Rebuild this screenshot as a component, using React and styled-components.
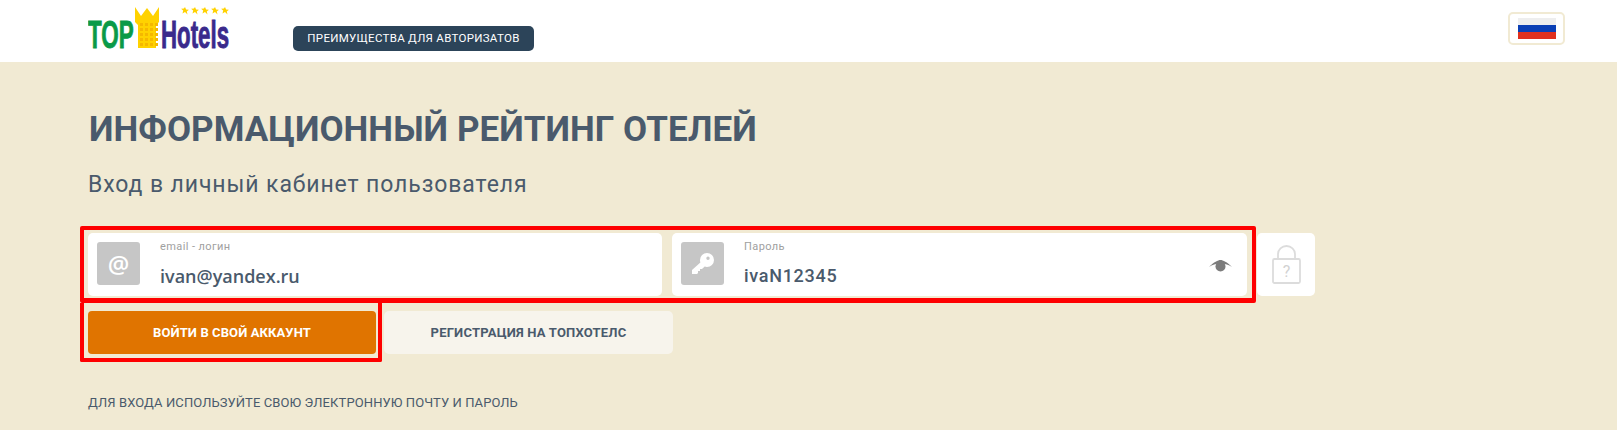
import React from "react";
import styled, { createGlobalStyle } from "styled-components";

const GlobalStyle = createGlobalStyle`
  html, body {
    margin: 0;
    padding: 0;
    background: #f1ead3;
    font-family: Roboto, "Open Sans", sans-serif;
  }
`;

const Logo = () => (
  <LogoSvg viewBox="0 0 141 50" width="141" height="50">
    <text
      transform="translate(0 41) scale(0.59 1)"
      fontFamily="Liberation Sans"
      fontWeight="700"
      fontSize="38"
      fill="#0a9a48"
      stroke="#0a9a48"
      strokeWidth="0.9"
    >
      TOP
    </text>
    <path d="M47 0l6 9 6-8 6 8 6-9v15l-3 3v23H50V18l-3-3z" fill="#ffd200" />
    <g fill="#f5b800">
      {[16, 21, 26, 31, 36].map((y) =>
        [52, 57, 62, 67].map((x) => <rect key={x + "-" + y} x={x} y={y} width="3" height="3" />)
      )}
    </g>
    <text
      transform="translate(73 41) scale(0.586 1)"
      fontFamily="Liberation Sans"
      fontWeight="700"
      fontSize="38"
      fill="#3a2a8c"
      stroke="#3a2a8c"
      strokeWidth="0.9"
    >
      Hotels
    </text>
    <g fill="#ffd200">
      {[97, 107, 117, 127, 137].map((x) => (
        <path
          key={x}
          transform={`translate(${x} 4)`}
          d="M0-4l1.1 2.6 2.8.2-2.1 1.8.7 2.8L0 1l-2.500 1.400.7-2.800-2.100-1.800 2.800-.2z"
        />
      ))}
    </g>
  </LogoSvg>
);

const App = () => {
  return (
    <>
      <GlobalStyle />
      <Header>
        <HeaderLeft>
          <Logo />
          <Pill>ПРЕИМУЩЕСТВА ДЛЯ АВТОРИЗАТОВ</Pill>
        </HeaderLeft>
        <FlagButton>
          <Flag />
        </FlagButton>
      </Header>
      <Main>
        <Title>ИНФОРМАЦИОННЫЙ РЕЙТИНГ ОТЕЛЕЙ</Title>
        <Subtitle>Вход в личный кабинет пользователя</Subtitle>
        <FieldsRow>
          <FieldsHighlight>
            <Field $width={574}>
              <IconBox>
                <AtSign>@</AtSign>
              </IconBox>
              <FieldText>
                <FieldLabel>email - логин</FieldLabel>
                <FieldValue>ivan@yandex.ru</FieldValue>
              </FieldText>
            </Field>
            <Field $width={575}>
              <IconBox>
                <svg width="22" height="21" viewBox="0 0 22 21">
                  <path
                    fill="#fff"
                    fillRule="evenodd"
                    d="M15 0a7 7 0 110 14c-.8 0-1.600-.1-2.300-.4L10 16H8v2H6v2l-1 1H0v-4L8.400 9.500C8.100 8.700 8 7.800 8 7a7 7 0 017-7zm1 3.500a1.700 1.700 0 100 3.400 1.700 1.700 0 000-3.400z"
                  />
                </svg>
              </IconBox>
              <FieldText>
                <FieldLabel>Пароль</FieldLabel>
                <PasswordValue>ivaN12345</PasswordValue>
              </FieldText>
              <EyeIcon width="23" height="12" viewBox="0 0 23 12">
                <path
                  fill="#7c7c7c"
                  d="M0 7C5 2 9 0 11.500 0S18 2 23 7c-3-2-7-3.500-11.500-3.500S3 5 0 7z"
                />
                <circle cx="11.500" cy="6.500" r="5" fill="#7c7c7c" />
              </EyeIcon>
            </Field>
          </FieldsHighlight>
          <LockButton>
            <svg width="29" height="39" viewBox="0 0 29 39">
              <path
                d="M6 14V9a8.500 8 0 0117 0v5"
                fill="none"
                stroke="#dcdcdc"
                strokeWidth="1.800"
              />
              <rect
                x="1"
                y="14"
                width="27"
                height="24"
                rx="1.500"
                fill="none"
                stroke="#dcdcdc"
                strokeWidth="1.800"
              />
              <text
                x="14.500"
                y="32"
                textAnchor="middle"
                fontFamily="Roboto"
                fontSize="16"
                fill="#d2d2d2"
              >
                ?
              </text>
            </svg>
          </LockButton>
        </FieldsRow>
        <ButtonsRow>
          <ButtonHighlight>
            <LoginButton>ВОЙТИ В СВОЙ АККАУНТ</LoginButton>
          </ButtonHighlight>
          <RegisterButton>РЕГИСТРАЦИЯ НА ТОПХОТЕЛС</RegisterButton>
        </ButtonsRow>
        <Hint>ДЛЯ ВХОДА ИСПОЛЬЗУЙТЕ СВОЮ ЭЛЕКТРОННУЮ ПОЧТУ И ПАРОЛЬ</Hint>
      </Main>
    </>
  );
};

export default App;

const Header = styled.header`
  display: flex;
  justify-content: space-between;
  align-items: flex-start;
  height: 62px;
  padding: 0 52px 0 88px;
  background: #fff;
`;

const HeaderLeft = styled.div`
  display: flex;
  align-items: flex-start;
`;

const LogoSvg = styled.svg`
  display: block;
  margin-top: 7px;
`;

const Pill = styled.div`
  margin: 26px 0 0 64px;
  width: 241px;
  height: 25px;
  border-radius: 5px;
  background: #2c4459;
  color: #fff;
  font-size: 11.5px;
  line-height: 25px;
  text-align: center;
  letter-spacing: 0.3px;
`;

const FlagButton = styled.div`
  display: flex;
  align-items: center;
  justify-content: center;
  box-sizing: border-box;
  width: 57px;
  height: 33px;
  margin-top: 12px;
  border: 2px solid #f1ead3;
  border-radius: 5px;
`;

const Flag = styled.div`
  width: 38px;
  height: 21px;
  background: linear-gradient(
    #eeeeee 0 33%,
    #0a3fb5 33% 66%,
    #e0301e 66% 100%
  );
`;

const Main = styled.main`
  box-sizing: border-box;
  height: 368px;
  padding: 48px 0 0 80px;
  background: #f1ead3;
  overflow: hidden;
`;

const Title = styled.h1`
  margin: 0 0 0 9px;
  color: #4a5a6c;
  font-size: 35px;
  font-weight: 700;
  line-height: 40px;
  letter-spacing: 0.05px;
`;

const Subtitle = styled.div`
  margin: 20px 0 0 8px;
  color: #4a5a6c;
  font-size: 23px;
  line-height: 30px;
  letter-spacing: 0.9px;
`;

const FieldsRow = styled.div`
  display: flex;
  align-items: flex-start;
  margin-top: 26px;
`;

const FieldsHighlight = styled.div`
  display: flex;
  gap: 10px;
  box-sizing: border-box;
  width: 1176px;
  height: 77px;
  padding: 3px 3px 2px 4px;
  border: 4px solid #fe0000;
  border-bottom-width: 5px;
  border-radius: 2px;
`;

const Field = styled.div`
  position: relative;
  display: flex;
  align-items: flex-start;
  box-sizing: border-box;
  width: ${(p) => p.$width}px;
  height: 63px;
  padding: 9px 0 0 9px;
  background: #fff;
  border-radius: 5px;
`;

const IconBox = styled.div`
  display: flex;
  align-items: center;
  justify-content: center;
  width: 43px;
  height: 43px;
  background: #c6c6c6;
  border-radius: 3px;
`;

const AtSign = styled.span`
  color: #fff;
  font-family: "Open Sans", sans-serif;
  font-size: 24px;
  font-weight: 600;
  line-height: 1;
`;

const FieldText = styled.div`
  margin-left: 20px;
`;

const FieldLabel = styled.div`
  margin-top: -2px;
  color: #a0a0a0;
  font-size: 11px;
  line-height: 14px;
  letter-spacing: 0.4px;
`;

const FieldValue = styled.div`
  margin-top: 10px;
  color: #4a5a6c;
  font-family: "Open Sans", sans-serif;
  font-size: 18px;
  font-weight: 600;
  line-height: 24px;
`;

const PasswordValue = styled(FieldValue)`
  font-family: Roboto, sans-serif;
  font-weight: 500;
  letter-spacing: 0.7px;
`;

const EyeIcon = styled.svg`
  position: absolute;
  top: 27px;
  right: 15px;
`;

const LockButton = styled.div`
  display: flex;
  align-items: center;
  justify-content: center;
  width: 58px;
  height: 63px;
  margin: 7px 0 0 1px;
  background: #fff;
  border-radius: 5px;
`;

const ButtonsRow = styled.div`
  display: flex;
  align-items: flex-start;
`;

const ButtonHighlight = styled.div`
  box-sizing: border-box;
  width: 302px;
  height: 59px;
  padding: 8px 2px 0 4px;
  border: 4px solid #fe0000;
  border-top: none;
  border-radius: 0 0 2px 2px;
`;

const LoginButton = styled.button`
  display: block;
  width: 100%;
  height: 43px;
  padding: 0;
  border: none;
  border-radius: 4px;
  background: #e07400;
  color: #fff;
  font-family: Roboto, sans-serif;
  font-size: 13px;
  font-weight: 700;
  letter-spacing: 0.1px;
`;

const RegisterButton = styled.button`
  width: 289px;
  height: 43px;
  margin: 8px 0 0 2px;
  padding: 0;
  border: none;
  border-radius: 5px;
  background: #f7f4ec;
  color: #4a5a6c;
  font-family: Roboto, sans-serif;
  font-size: 13px;
  font-weight: 700;
  letter-spacing: 0.2px;
`;

const Hint = styled.div`
  margin: 32px 0 0 8px;
  color: #4a5a6c;
  font-size: 13px;
  line-height: 18px;
  letter-spacing: 0.1px;
`;
